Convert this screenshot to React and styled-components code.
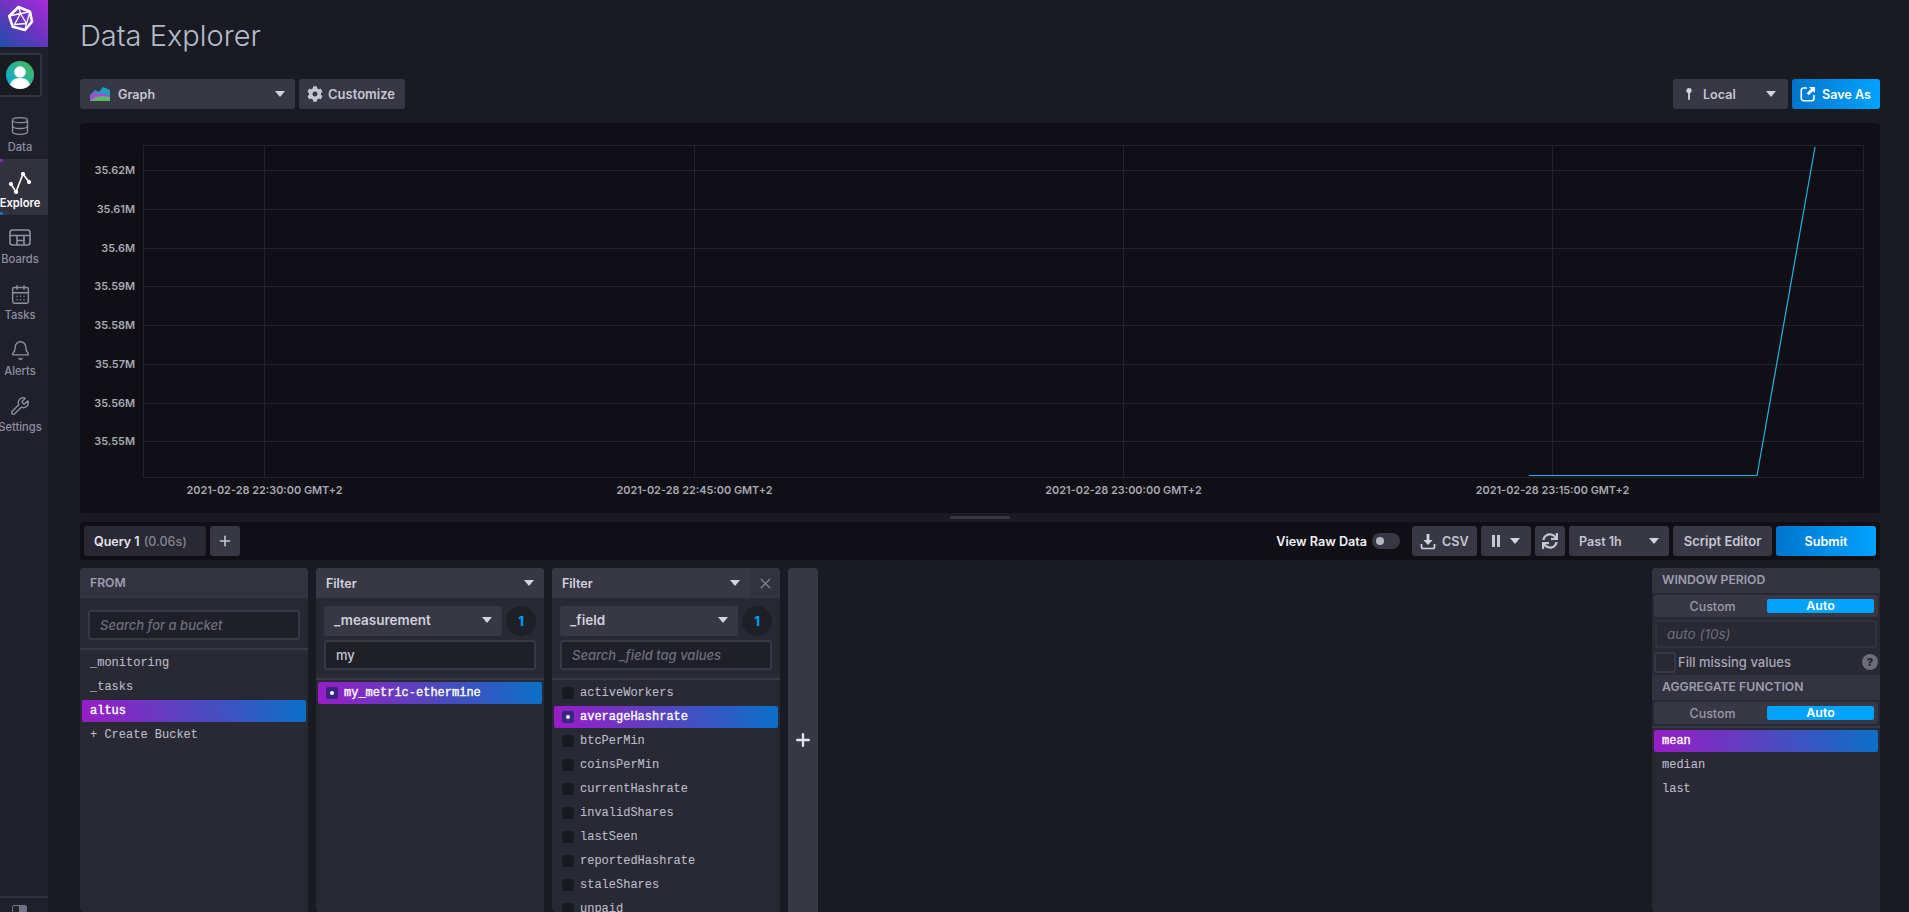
import React from 'react';
import styled, { createGlobalStyle } from 'styled-components';
import { Database, CalendarDays, Bell, Wrench, Plus, X } from 'lucide-react';
import { FaCog, FaSync } from 'react-icons/fa';

const GlobalStyle = createGlobalStyle`
  html, body {
    margin: 0;
    height: 100%;
    overflow: hidden;
    background: #1a1a22;
  }
  * { box-sizing: border-box; }
`;

const UI_FONT = `Inter, "Noto Sans", sans-serif`;
const MONO_FONT = `"Liberation Mono", monospace`;
const SELECTED = 'linear-gradient(80deg, #9a1cc8 0%, #5a42bf 45%, #0a70c8 100%)';

///////////////////////
// sidebar
const Shell = styled.div`
  display: flex;
  height: 912px;
  font-family: ${UI_FONT};
  overflow: hidden;
`;

const Sidebar = styled.nav`
  display: flex;
  flex-direction: column;
  flex: 0 0 48px;
  min-width: 0;
  background: #20202a;
  overflow: hidden;
`;

const LogoBox = styled.div`
  flex: 0 0 47px;
  background: linear-gradient(40deg, #1c4fa8 0%, #6a35c0 50%, #a92bdc 100%);
`;

const AvatarBox = styled.div`
  display: flex;
  align-items: center;
  justify-content: center;
  width: 42px;
  height: 44px;
  margin: 6px 0 6px;
  padding-right: 1px;
  border: 2px solid #333340;
  border-left: none;
  border-radius: 0 3px 3px 0;
  background: #1a1a22;
`;

const NavItem = styled.div`
  position: relative;
  display: flex;
  flex-direction: column;
  align-items: center;
  height: 56px;
  padding: 11px 8px 0 0;
  background: ${p => (p.$active ? '#32323e' : 'transparent')};
  color: ${p => (p.$active ? '#ffffff' : '#8f8fa3')};
  font-size: 11.2px;
  font-weight: ${p => (p.$active ? 600 : 500)};
  white-space: nowrap;
`;

const NavIcon = styled.div`
  display: flex;
  align-items: center;
  justify-content: center;
  height: 24px;
`;

const NavLabel = styled.span`
  margin-top: 3px;
  line-height: 13px;
`;

const ActiveCorner = styled.i`
  position: absolute;
  left: 0;
  width: 3px;
  height: 3px;
  ${p => (p.$bottom ? 'bottom: 0;' : 'top: 0;')}
  background: ${p => (p.$bottom ? '#1268c4' : '#8e24c8')};
`;

const SideFooter = styled.div`
  margin-top: auto;
  height: 16px;
  padding: 7px 0 0 12px;
  border-top: 2px solid #333340;
  overflow: hidden;
`;

const FooterGlyph = styled.div`
  width: 15px;
  height: 12px;
  border-radius: 2px;
  background: linear-gradient(90deg, #23232e 0 45%, #6d7284 45% 100%);
  border: 1px solid #6d7284;
`;

///////////////////////
// main column
const Main = styled.main`
  display: flex;
  flex-direction: column;
  flex: 1;
  min-width: 0;
  padding: 0 29px 0 32px;
`;

const PageHeader = styled.header`
  display: flex;
  align-items: center;
  height: 79px;
  padding: 0 0 9px 0;
`;

const Title = styled.h1`
  margin: 0;
  color: #b3bccb;
  font-size: 29px;
  font-weight: 300;
  letter-spacing: 0;
`;

const Toolbar = styled.div`
  display: flex;
  align-items: center;
  gap: 4px;
  height: 30px;
  margin-bottom: 14px;
`;

const Button = styled.div`
  display: flex;
  align-items: center;
  flex: 0 0 ${p => p.$w}px;
  height: 30px;
  gap: ${p => p.$gap ?? 6}px;
  padding: 0 ${p => p.$pad ?? 8}px;
  justify-content: ${p => p.$justify || 'flex-start'};
  border-radius: 3px;
  background: ${p => (p.$primary ? 'linear-gradient(90deg, #0075cc, #00a3ff)' : '#383844')};
  color: ${p => (p.$primary ? '#ffffff' : '#c6c6d3')};
  font-size: ${p => p.$size || 12.6}px;
  font-weight: 600;
  white-space: nowrap;
`;

const Caret = styled.i`
  flex: none;
  width: 0;
  height: 0;
  margin-left: ${p => (p.$push ? 'auto' : '0')};
  border-left: 5px solid transparent;
  border-right: 5px solid transparent;
  border-top: 6px solid #d4d4e0;
`;

const Spacer = styled.div`
  flex: 1;
`;

const GraphPanel = styled.section`
  flex: 0 0 390px;
  border-radius: 4px;
  background: #0f0f15;
`;

const ChartSvg = styled.svg`
  display: block;
  width: 1800px;
  height: 390px;
  font-family: ${UI_FONT};
  font-size: 10.9px;
  font-weight: 600;
  fill: #a9a9b3;
`;

const ResizeBar = styled.div`
  display: flex;
  justify-content: center;
  flex: 0 0 9px;
  padding-top: 3px;
`;

const ResizeGrip = styled.div`
  width: 60px;
  height: 3px;
  border-radius: 2px;
  background: #383844;
`;

///////////////////////
// query bar
const QueryBar = styled.div`
  display: flex;
  align-items: center;
  gap: 4px;
  flex: 0 0 38px;
  padding: 0 4px;
  border-radius: 4px;
  background: #0f0f15;
`;

const QueryTab = styled.div`
  display: flex;
  align-items: center;
  gap: 4px;
  flex: 0 0 122px;
  height: 30px;
  padding-left: 10px;
  border-radius: 3px;
  background: #292933;
  color: #e4e4ee;
  font-size: 12.5px;
  font-weight: 600;
`;

const QueryTime = styled.span`
  color: #85858f;
  font-weight: 500;
`;

const RawLabel = styled.span`
  margin-right: 1px;
  color: #f1f1f7;
  font-size: 12.6px;
  font-weight: 600;
  white-space: nowrap;
`;

const Switch = styled.div`
  display: flex;
  align-items: center;
  flex: 0 0 28px;
  height: 16px;
  margin-right: 8px;
  padding-left: 4px;
  border-radius: 8px;
  background: #383844;
`;

const SwitchKnob = styled.i`
  width: 8px;
  height: 8px;
  border-radius: 50%;
  background: #b6b6c2;
`;

const PauseBars = styled.i`
  flex: none;
  width: 8px;
  height: 12px;
  border-left: 3px solid #c6c6d3;
  border-right: 3px solid #c6c6d3;
`;

///////////////////////
// builder cards
const Builder = styled.div`
  display: flex;
  gap: 8px;
  flex: 1;
  min-height: 0;
  margin-top: 8px;
`;

const Card = styled.section`
  display: flex;
  flex-direction: column;
  flex: 0 0 228px;
  margin-left: ${p => (p.$right ? 'auto' : '0')};
  border-radius: 4px 4px 0 4px;
  background: #292933;
  overflow: hidden;
`;

const CardHead = styled.div`
  display: flex;
  align-items: center;
  flex: 0 0 ${p => p.$h || 30}px;
  background: #333340;
`;

const CardTitle = styled.div`
  display: flex;
  align-items: center;
  flex: 1;
  height: 100%;
  padding: ${p => (p.$select ? '0 10px' : '0 10px 2px')};
  border-radius: 0 3px 3px 0;
  background: ${p => (p.$select ? '#383844' : 'transparent')};
  color: ${p => (p.$select ? '#d3d3e0' : '#9d9dae')};
  font-size: ${p => (p.$select ? 12.5 : 12.2)}px;
  font-weight: 600;
`;

const CloseSlot = styled.div`
  display: flex;
  align-items: center;
  justify-content: center;
  flex: 0 0 30px;
  color: #7d7d8c;
`;

const CardPad = styled.div`
  padding: ${p => p.$pad};
`;

const SelectRow = styled.div`
  display: flex;
  gap: 4px;
  margin-bottom: 4px;
`;

const TagSelect = styled.div`
  display: flex;
  align-items: center;
  flex: 1;
  height: 30px;
  padding: 0 10px 2px;
  border-radius: 3px;
  background: #383844;
  color: #d0d0dd;
  font-size: 13.5px;
  font-weight: 600;
`;

const CountBadge = styled.div`
  display: flex;
  align-items: center;
  justify-content: center;
  flex: 0 0 30px;
  height: 30px;
  border-radius: 50%;
  background: #1f1f28;
  color: #0098f0;
  font-size: 13px;
  font-weight: 800;
`;

const SearchInput = styled.input`
  display: block;
  width: 100%;
  height: ${p => p.$h || 30}px;
  padding: 0 10px;
  border: 2px solid #383844;
  border-radius: 3px;
  outline: none;
  background: #1f1f28;
  color: #c6c6d3;
  font-family: ${UI_FONT};
  font-size: 13px;
  font-weight: 500;
  &::placeholder {
    color: #6e6e7e;
    font-style: italic;
  }
`;

const Divider = styled.div`
  flex: 0 0 2px;
  margin-top: ${p => p.$top || 0}px;
  background: #383844;
`;

const List = styled.div`
  display: flex;
  flex-direction: column;
  gap: 2px;
  padding: 2px;
  font-family: ${MONO_FONT};
  font-size: 12px;
`;

const Row = styled.div`
  display: flex;
  align-items: center;
  flex: 0 0 22px;
  height: 22px;
  padding-left: 8px;
  border-radius: 2px;
  background: ${p => (p.$selected ? SELECTED : 'transparent')};
  color: ${p => (p.$selected ? '#ffffff' : '#bcbcc9')};
  -webkit-text-stroke: ${p => (p.$selected ? '0.35px' : '0.1px')};
`;

const Check = styled.i`
  display: flex;
  align-items: center;
  justify-content: center;
  flex: 0 0 12px;
  height: 12px;
  margin-right: 6px;
  border-radius: 2px;
  background: ${p => (p.$on ? '#36267e' : '#1a1a22')};
  &::after {
    content: '';
    display: ${p => (p.$on ? 'block' : 'none')};
    width: 4px;
    height: 4px;
    border-radius: 50%;
    background: #fff;
  }
`;

const AddCard = styled.div`
  display: flex;
  align-items: center;
  justify-content: center;
  flex: 0 0 30px;
  border-radius: 4px 4px 0 0;
  background: #383844;
  color: #e4e4ee;
`;

const Toggle = styled.div`
  display: grid;
  grid-template-columns: 1fr 107px;
  align-items: center;
  height: 22px;
  margin: 2px 2px 0;
  padding: 0 4px;
  border-radius: 3px;
  background: #383844;
  color: #9898aa;
  font-size: 12.4px;
  font-weight: 500;
  text-align: center;
`;

const ToggleOn = styled.div`
  height: 14px;
  line-height: 14px;
  border-radius: 2px;
  background: #00a3ff;
  color: #fff;
  font-weight: 600;
`;

const PeriodInput = styled.div`
  display: flex;
  align-items: center;
  height: 28px;
  margin: 3px 3px 0;
  padding-left: 10px;
  border: 2px solid #32323e;
  border-radius: 3px;
  color: #6e6e7e;
  font-size: 13.5px;
  font-style: italic;
`;

const FillRow = styled.div`
  display: flex;
  align-items: center;
  height: 22px;
  margin: 3px 2px 2px;
  color: #a6a6b6;
  font-size: 13px;
  font-weight: 500;
`;

const FillBox = styled.i`
  flex: 0 0 22px;
  height: 21px;
  margin-right: 2px;
  border: 2px solid #383844;
  border-radius: 3px;
`;

const Help = styled.i`
  display: flex;
  align-items: center;
  justify-content: center;
  flex: 0 0 16px;
  height: 16px;
  margin-left: auto;
  border-radius: 50%;
  background: #6d6d7a;
  color: #22222a;
  font-size: 11px;
  font-style: normal;
  font-weight: 800;
`;

// small drawings
const Logo = () => (
  <svg width="48" height="47" viewBox="0 0 48 47" fill="none" stroke="#fff" strokeLinejoin="round" style={{ display: 'block' }}>
    <path d="M18.5 7 L30 11.8 L32 21.7 L25 30 L12.8 26.8 L9.2 16 Z" strokeWidth="2.6" />
    <path d="M20.5 13.5 L26.5 23.5 L14.5 24.5 Z M18.5 7 L20.5 13.5 L30 11.8 L26.5 23.5 L25 30 M9.2 16 L20.5 13.5" strokeWidth="1.3" />
  </svg>
);

const Avatar = () => (
  <svg width="28" height="28" viewBox="0 0 28 28">
    <defs>
      <linearGradient id="avatarFill" x1="1" y1="0" x2="0" y2="1">
        <stop offset="0" stopColor="#4cba4f" />
        <stop offset="1" stopColor="#00a9e8" />
      </linearGradient>
      <clipPath id="avatarClip"><circle cx="14" cy="14" r="14" /></clipPath>
    </defs>
    <circle cx="14" cy="14" r="14" fill="url(#avatarFill)" />
    <g clipPath="url(#avatarClip)" fill="#fff">
      <circle cx="14" cy="11" r="5.8" />
      <path d="M3.5 28 C3.5 20 8 17 14 17 C20 17 24.5 20 24.5 28 Z" />
    </g>
  </svg>
);

const ExploreIcon = () => (
  <svg width="24" height="24" viewBox="0 0 24 24" fill="#fff" stroke="#fff">
    <path d="M3 14 L8 22 L15 4 L21 12" fill="none" strokeWidth="1.6" />
    <circle cx="3" cy="14" r="1.7" />
    <circle cx="8" cy="22" r="1.7" />
    <circle cx="15" cy="4" r="1.7" />
    <circle cx="21" cy="12" r="1.7" />
  </svg>
);

const BoardsIcon = () => (
  <svg width="22" height="18" viewBox="0 0 22 18" fill="none" stroke="currentColor" strokeWidth="1.6">
    <rect x="1" y="1" width="20" height="15" rx="2.5" />
    <path d="M1 6.5 H21 M8 6.5 V16 M15 6.5 V16 M8 11.5 H15" />
  </svg>
);

const GraphIcon = () => (
  <svg width="20" height="14" viewBox="0 0 20 14">
    <path d="M0 8 L5 3 L9 5 L13 0 L20 3 V10 H0 Z" fill="#1f9fc4" />
    <path d="M0 10 L4 5 L9 7 L12 6 L20 9 V14 H0 Z" fill="#a44bd8" />
    <path d="M0 14 L6 10 L12 9 L20 10 V14 Z" fill="#5fb86a" />
  </svg>
);

const PinIcon = () => (
  <svg width="8" height="14" viewBox="0 0 8 14" fill="#d4d4e0">
    <circle cx="4" cy="3.5" r="2.6" />
    <rect x="3.1" y="4" width="1.8" height="9" rx="0.8" />
  </svg>
);

const SaveIcon = () => (
  <svg width="16" height="16" viewBox="0 0 16 16">
    <path d="M7 2 H3.5 A2.2 2.2 0 0 0 1.3 4.2 V12.5 A2.2 2.2 0 0 0 3.5 14.7 H11.8 A2.2 2.2 0 0 0 14 12.5 V9" fill="none" stroke="#fff" strokeWidth="1.6" />
    <path d="M9 1 H15 V7 L13 5 L8.7 9.3 L6.7 7.3 L11 3 Z" fill="#fff" />
  </svg>
);

const DownloadIcon = () => (
  <svg width="16" height="17" viewBox="0 0 16 17">
    <path d="M6.6 1 H9.4 V7 H12.6 L8 12 L3.4 7 H6.6 Z" fill="#d4d4e0" />
    <path d="M1.5 11 V14 A1.5 1.5 0 0 0 3 15.5 H13 A1.5 1.5 0 0 0 14.5 14 V11" fill="none" stroke="#d4d4e0" strokeWidth="1.7" />
  </svg>
);

// the graph, in panel coordinates
const PLOT = { left: 63, right: 1783, top: 22, bottom: 354 };
const H_LINES = [47, 86, 125, 163, 202, 241, 280, 318];
const V_LINES = [184, 614, 1043, 1472];
const Y_LABELS = ['35.62M', '35.61M', '35.6M', '35.59M', '35.58M', '35.57M', '35.56M', '35.55M'];
const X_LABELS = ['2021-02-28 22:30:00 GMT+2', '2021-02-28 22:45:00 GMT+2', '2021-02-28 23:00:00 GMT+2', '2021-02-28 23:15:00 GMT+2'];

const Chart = () => (
  <ChartSvg viewBox="0 0 1800 390">
    <g stroke="#23232c" strokeWidth="1">
      {H_LINES.map(y => <line key={y} x1={PLOT.left} x2={PLOT.right} y1={y + 0.5} y2={y + 0.5} />)}
      {V_LINES.map(x => <line key={x} x1={x + 0.5} x2={x + 0.5} y1={PLOT.top} y2={PLOT.bottom} />)}
      <rect x={PLOT.left + 0.5} y={PLOT.top + 0.5} width={PLOT.right - PLOT.left} height={PLOT.bottom - PLOT.top} fill="none" />
    </g>
    {H_LINES.map((y, i) => <text key={y} x="55" y={y + 4} textAnchor="end">{Y_LABELS[i]}</text>)}
    {V_LINES.map((x, i) => <text key={x} x={x + 0.5} y="371" textAnchor="middle">{X_LABELS[i]}</text>)}
    <polyline points="1449,352.5 1677,352.5 1735,24" fill="none" stroke="#27b0e6" strokeWidth="1.2" />
  </ChartSvg>
);

const FIELDS = ['activeWorkers', 'averageHashrate', 'btcPerMin', 'coinsPerMin', 'currentHashrate', 'invalidShares', 'lastSeen', 'reportedHashrate', 'staleShares', 'unpaid'];
const NAV = [
  { label: 'Data', icon: <Database size={20} strokeWidth={1.6} /> },
  { label: 'Explore', icon: <ExploreIcon />, active: true },
  { label: 'Boards', icon: <BoardsIcon /> },
  { label: 'Tasks', icon: <CalendarDays size={21} strokeWidth={1.6} /> },
  { label: 'Alerts', icon: <Bell size={21} strokeWidth={1.6} /> },
  { label: 'Settings', icon: <Wrench size={20} strokeWidth={1.6} /> },
];

export default function App() {
  return (
    <Shell>
      <GlobalStyle />
      <Sidebar>
        <LogoBox><Logo /></LogoBox>
        <AvatarBox><Avatar /></AvatarBox>
        {NAV.map(item => (
          <NavItem key={item.label} $active={item.active}>
            {item.active && <ActiveCorner />}
            {item.active && <ActiveCorner $bottom />}
            <NavIcon>{item.icon}</NavIcon>
            <NavLabel>{item.label}</NavLabel>
          </NavItem>
        ))}
        <SideFooter><FooterGlyph /></SideFooter>
      </Sidebar>

      <Main>
        <PageHeader><Title>Data Explorer</Title></PageHeader>

        <Toolbar>
          <Button $w={215} $pad={10} $gap={8}>
            <GraphIcon />
            Graph
            <Caret $push />
          </Button>
          <Button $w={106} $gap={5} $size={13}>
            <FaCog size={16} />
            Customize
          </Button>
          <Spacer />
          <Button $w={115} $pad={12} $gap={10}>
            <PinIcon />
            Local
            <Caret $push />
          </Button>
          <Button $w={88} $primary>
            <SaveIcon />
            Save As
          </Button>
        </Toolbar>

        <GraphPanel><Chart /></GraphPanel>
        <ResizeBar><ResizeGrip /></ResizeBar>

        <QueryBar>
          <QueryTab>Query 1 <QueryTime>(0.06s)</QueryTime></QueryTab>
          <Button $w={30} $pad={0} $justify="center"><Plus size={16} strokeWidth={2.4} /></Button>
          <Spacer />
          <RawLabel>View Raw Data</RawLabel>
          <Switch><SwitchKnob /></Switch>
          <Button $w={65} $gap={6}>
            <DownloadIcon />
            CSV
          </Button>
          <Button $w={50} $pad={0} $gap={10} $justify="center">
            <PauseBars />
            <Caret />
          </Button>
          <Button $w={30} $pad={0} $justify="center"><FaSync size={16} /></Button>
          <Button $w={100} $pad={10}>
            Past 1h
            <Caret $push />
          </Button>
          <Button $w={99} $pad={0} $justify="center" $size={13}>Script Editor</Button>
          <Button $w={100} $pad={0} $justify="center" $primary>Submit</Button>
        </QueryBar>

        <Builder>
          <Card>
            <CardHead><CardTitle>FROM</CardTitle></CardHead>
            <CardPad $pad="12px 8px 8px"><SearchInput placeholder="Search for a bucket" readOnly /></CardPad>
            <Divider />
            <List>
              <Row>_monitoring</Row>
              <Row>_tasks</Row>
              <Row $selected>altus</Row>
              <Row>+ Create Bucket</Row>
            </List>
          </Card>

          <Card>
            <CardHead>
              <CardTitle $select>Filter<Caret $push /></CardTitle>
            </CardHead>
            <CardPad $pad="8px 8px 8px">
              <SelectRow>
                <TagSelect>_measurement<Caret $push /></TagSelect>
                <CountBadge>1</CountBadge>
              </SelectRow>
              <SearchInput value="my" readOnly />
            </CardPad>
            <Divider />
            <List>
              <Row $selected><Check $on />my_metric-ethermine</Row>
            </List>
          </Card>

          <Card>
            <CardHead>
              <CardTitle $select>Filter<Caret $push /></CardTitle>
              <CloseSlot><X size={17} strokeWidth={2} /></CloseSlot>
            </CardHead>
            <CardPad $pad="8px 8px 8px">
              <SelectRow>
                <TagSelect>_field<Caret $push /></TagSelect>
                <CountBadge>1</CountBadge>
              </SelectRow>
              <SearchInput placeholder="Search _field tag values" readOnly />
            </CardPad>
            <Divider />
            <List>
              {FIELDS.map(f => (
                <Row key={f} $selected={f === 'averageHashrate'}>
                  <Check $on={f === 'averageHashrate'} />{f}
                </Row>
              ))}
            </List>
          </Card>

          <AddCard><Plus size={20} strokeWidth={2.8} /></AddCard>

          <Card $right>
            <CardHead $h={25}><CardTitle>WINDOW PERIOD</CardTitle></CardHead>
            <Toggle><span>Custom</span><ToggleOn>Auto</ToggleOn></Toggle>
            <PeriodInput>auto (10s)</PeriodInput>
            <FillRow>
              <FillBox />
              Fill missing values
              <Help>?</Help>
            </FillRow>
            <CardHead $h={25}><CardTitle>AGGREGATE FUNCTION</CardTitle></CardHead>
            <Toggle><span>Custom</span><ToggleOn>Auto</ToggleOn></Toggle>
            <Divider $top={2} />
            <List>
              <Row $selected>mean</Row>
              <Row>median</Row>
              <Row>last</Row>
            </List>
          </Card>
        </Builder>
      </Main>
    </Shell>
  );
}
